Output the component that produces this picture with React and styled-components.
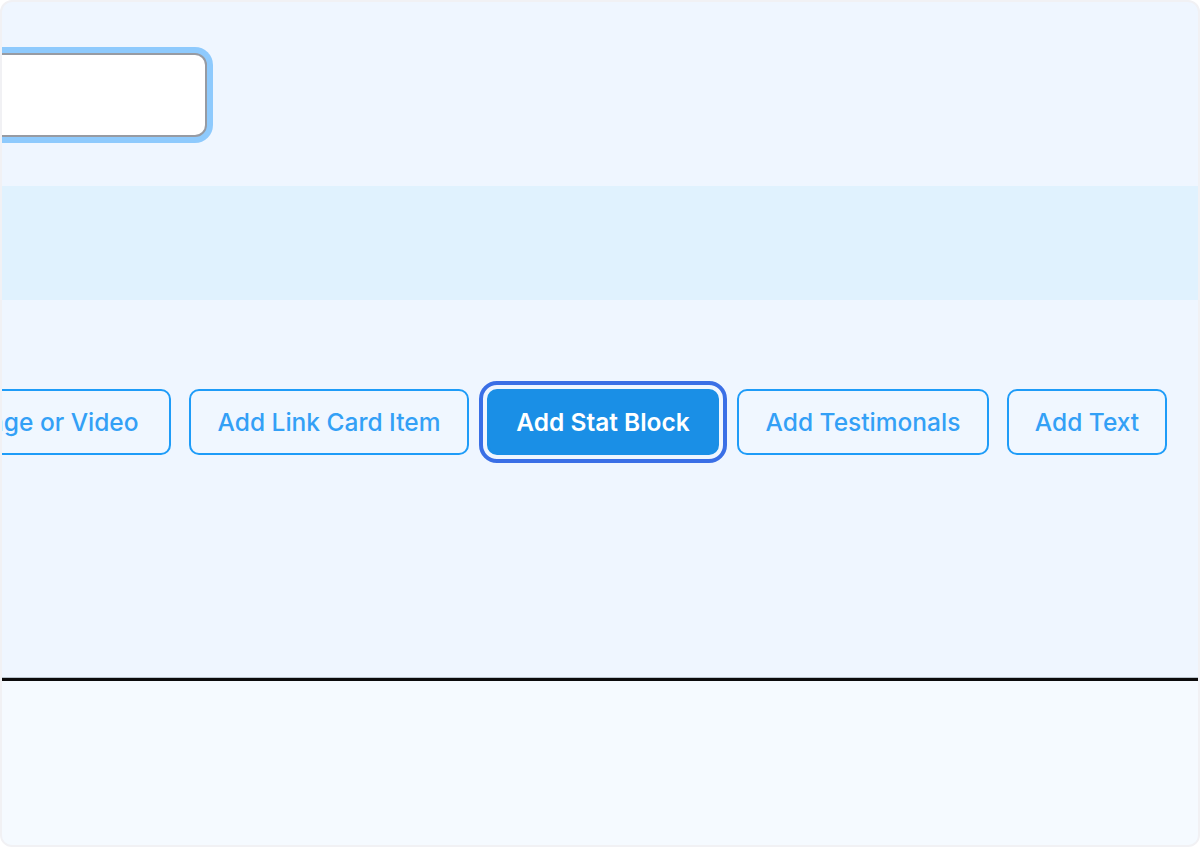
import React from "react";
import styled, { createGlobalStyle } from "styled-components";

const GlobalStyle = createGlobalStyle`
  html, body {
    margin: 0;
    padding: 0;
    background: #ffffff;
  }
  body {
    font-family: Inter, "Noto Sans", "Liberation Sans", sans-serif;
  }
`;

const Frame = styled.div`
  box-sizing: border-box;
  width: 1200px;
  height: 847px;
  border: 2px solid #f1f1f4;
  border-radius: 12px;
  overflow: hidden;
  display: flex;
  flex-direction: column;
  background: #eff6ff;
`;

const TopSection = styled.div`
  height: 184px;
  padding-top: 51px;
  box-sizing: border-box;
  display: flex;
`;

const Field = styled.input`
  box-sizing: border-box;
  width: 300px;
  height: 84px;
  margin-left: -95px;
  border: 2px solid #979ba3;
  border-radius: 12px;
  background: #ffffff;
  box-shadow: 0 0 0 6px #8ecafd;
  outline: none;
`;

const Band = styled.div`
  height: 114px;
  background: #e0f2fe;
`;

const Middle = styled.div`
  height: 378px;
  box-sizing: border-box;
  padding-top: 89px;
  padding-right: 31px;
  display: flex;
  justify-content: flex-end;
`;

const ButtonRow = styled.div`
  display: flex;
  gap: 18px;
  flex-shrink: 0;
`;

const AddButton = styled.button`
  box-sizing: border-box;
  flex-shrink: 0;
  width: ${(p) => p.$w}px;
  height: 66px;
  border-radius: 10px;
  font-family: Inter, "Noto Sans", "Liberation Sans", sans-serif;
  font-size: 24.5px;
  font-weight: ${(p) => (p.$active ? 600 : 500)};
  white-space: nowrap;
  cursor: pointer;
  padding: 0;
  border: 2.5px solid ${(p) => (p.$active ? "#1a8fe6" : "#1e9cf8")};
  background: ${(p) => (p.$active ? "#1a8fe6" : "#f0f7ff")};
  color: ${(p) => (p.$active ? "#ffffff" : "#33a0f6")};
  outline: ${(p) => (p.$active ? "4px solid #3a6fe6" : "none")};
  outline-offset: 4px;
`;

const Divider = styled.div`
  height: 3px;
  background: #0b0b0c;
  box-shadow: 0 -1px 0 #b9c3cc, 0 1px 0 #b9c3cc;
`;

const Bottom = styled.div`
  flex: 1;
  background: #f5faff;
`;

const buttons = [
  { label: "Add Image or Video", w: 296 },
  { label: "Add Link Card Item", w: 280 },
  { label: "Add Stat Block", w: 232, active: true },
  { label: "Add Testimonals", w: 252 },
  { label: "Add Text", w: 160 },
];

const App = () => {
  return (
    <>
      <GlobalStyle />
      <Frame>
        <TopSection>
          <Field type="text" />
        </TopSection>
        <Band />
        <Middle>
          <ButtonRow>
            {buttons.map((b) => (
              <AddButton key={b.label} $w={b.w} $active={b.active}>
                {b.label}
              </AddButton>
            ))}
          </ButtonRow>
        </Middle>
        <Divider />
        <Bottom />
      </Frame>
    </>
  );
};

export default App;
